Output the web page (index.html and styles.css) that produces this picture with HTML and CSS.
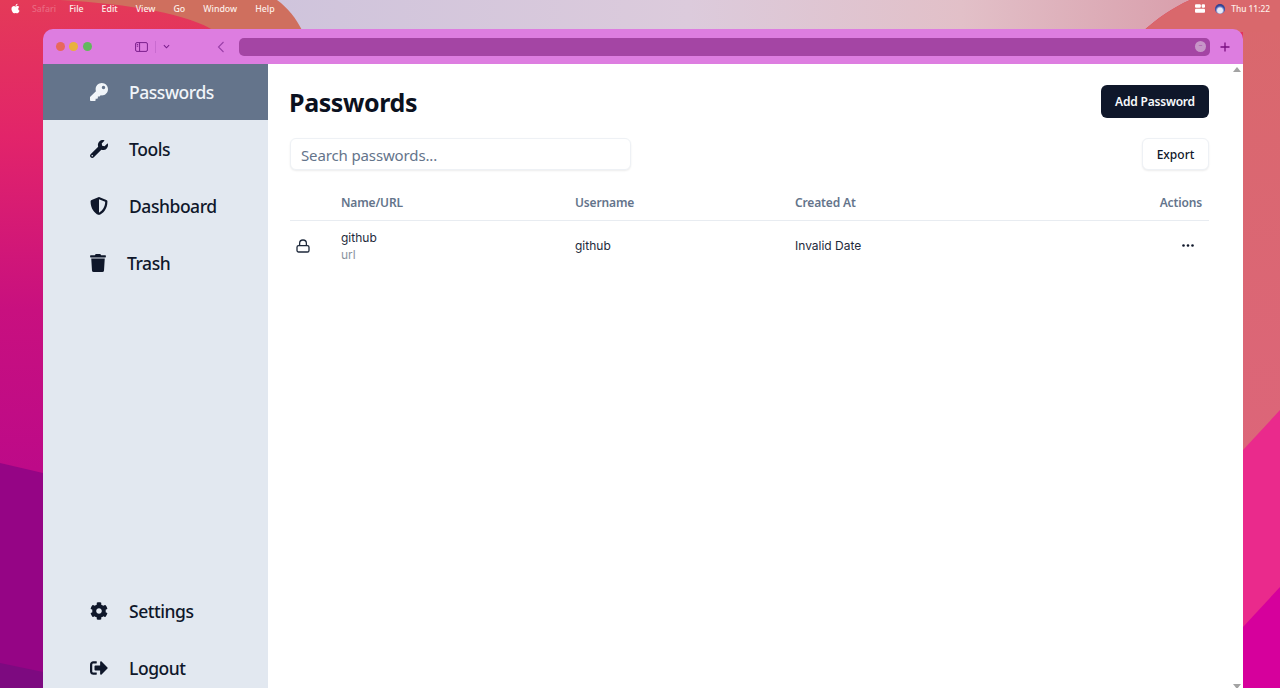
FILE: index.html
```html
<!DOCTYPE html>
<html lang="en">
<head>
    <meta charset="UTF-8">
    <title>Passwords</title>
    <link rel="stylesheet" href="styles.css">
</head>
<body>
    <!-- desktop wallpaper -->
    <svg class="wallpaper" viewBox="0 0 1280 688" preserveAspectRatio="none">
        <defs>
            <linearGradient id="wallLeft" x1="0" y1="0" x2="0" y2="1">
                <stop offset="0" stop-color="#e43a58"/>
                <stop offset="0.2" stop-color="#e2246a"/>
                <stop offset="0.45" stop-color="#c8107f"/>
                <stop offset="0.68" stop-color="#bd0a88"/>
            </linearGradient>
            <linearGradient id="wallRight" x1="0" y1="0" x2="0" y2="1">
                <stop offset="0" stop-color="#d9686c"/>
                <stop offset="1" stop-color="#de6480"/>
            </linearGradient>
            <linearGradient id="wallTop" x1="0" y1="0" x2="1" y2="0">
                <stop offset="0" stop-color="#cfc4dc"/>
                <stop offset="0.45" stop-color="#dccbdc"/>
                <stop offset="0.75" stop-color="#e2c0c8"/>
                <stop offset="1" stop-color="#d99fac"/>
            </linearGradient>
        </defs>
        <rect width="1280" height="688" fill="url(#wallLeft)"/>
        <path d="M0 463L43 473V688H0Z" fill="#950585"/>
        <path d="M0 663L43 672V688H0Z" fill="#7d0a80"/>
        <rect x="1243" width="37" height="688" fill="url(#wallRight)"/>
        <path d="M1243 450L1280 410V688H1243Z" fill="#ea2a8c"/>
        <path d="M1243 627L1280 587V688H1243Z" fill="#d6009c"/>
        <path d="M60 0C130 4 190 14 216 32H330V0Z" fill="#cf6f5e"/>
        <path d="M277 0C288 8 296 18 303 32H1142C1158 18 1172 8 1190 0Z" fill="url(#wallTop)"/>
        <path d="M1190 0C1172 8 1158 18 1142 32H1280V0Z" fill="#d9686c"/>
    </svg>

    <div class="menubar">
        <div class="menu-left">
            <svg class="apple" viewBox="0 0 384 512"><path d="M318.7 268.7c-.2-36.7 16.4-64.4 50-84.8-18.8-26.9-47.2-41.7-84.7-44.6-35.5-2.8-74.3 20.7-88.5 20.7-15 0-49.4-19.7-76.4-19.7C63.3 141.2 4 184.8 4 273.5q0 39.3 14.4 81.2c12.8 36.7 59 126.7 107.2 125.2 25.2-.6 43-17.9 75.8-17.9 31.8 0 48.3 17.9 76.4 17.9 48.6-.7 90.4-82.5 102.6-119.3-65.2-30.7-61.7-90-61.7-91.9zm-56.6-164.2c27.3-32.4 24.8-61.9 24-72.5-24.1 1.4-52 16.4-67.9 34.9-17.5 19.8-27.8 44.3-25.6 71.9 26.1 2 49.9-11.4 69.5-34.3z"/></svg>
            <span class="menu-app">Safari</span>
            <span>File</span>
            <span>Edit</span>
            <span>View</span>
            <span>Go</span>
            <span>Window</span>
            <span>Help</span>
        </div>
        <div class="menu-right">
            <svg class="tray" viewBox="0 0 12 10"><rect x="0" y="0" width="7" height="4.2" rx="1.2"/><rect x="8" y="0" width="4" height="4.2" rx="1.2"/><rect x="0" y="5.4" width="12" height="4.6" rx="1.2"/></svg>
            <span class="siri"></span>
            <span>Thu 11:22</span>
        </div>
    </div>

    <div class="window">
        <div class="toolbar">
            <div class="lights">
                <span class="light red"></span>
                <span class="light yellow"></span>
                <span class="light green"></span>
            </div>
            <svg class="tb-sidebar" viewBox="0 0 13 10"><rect x="0.6" y="0.6" width="11.8" height="8.8" rx="1.4"/><path d="M4.6 0.6V9.4"/><path d="M1.8 2.6H3.2M1.8 4.2H3.2" /></svg>
            <span class="tb-sep"></span>
            <svg class="tb-chev" viewBox="0 0 8 5"><path d="M1 1l3 3 3-3"/></svg>
            <svg class="tb-back" viewBox="0 0 8 12"><path d="M6.5 1L1.5 6l5 5"/></svg>
            <div class="urlbar"><span class="url-more">•••</span></div>
            <svg class="tb-plus" viewBox="0 0 10 10"><path d="M5 0.5v9M0.5 5h9"/></svg>
        </div>

        <div class="app">
            <aside class="sidebar">
                <a class="side-item active">
                    <svg class="side-icon" viewBox="0 0 512 512"><path d="M512 176.001C512 273.203 433.202 352 336 352c-11.22 0-22.19-1.062-32.827-3.069l-24.012 27.014A23.999 23.999 0 0 1 261.223 384H224v40c0 13.255-10.745 24-24 24h-40v40c0 13.255-10.745 24-24 24H24c-13.255 0-24-10.745-24-24v-78.059c0-6.365 2.529-12.47 7.029-16.971l161.802-161.802C163.108 213.814 160 195.271 160 176 160 78.798 238.797.001 335.999 0 433.488-.001 512 78.511 512 176.001zM336 128c0 26.51 21.49 48 48 48s48-21.49 48-48-21.49-48-48-48-48 21.49-48 48z"/></svg>
                    <span>Passwords</span>
                </a>
                <a class="side-item">
                    <svg class="side-icon" viewBox="0 0 512 512"><path d="M507.73 109.1c-2.24-9.03-13.54-12.09-20.12-5.51l-74.36 74.36-67.88-11.31-11.31-67.88 74.36-74.36c6.62-6.62 3.43-17.9-5.66-20.16-47.38-11.74-99.55.91-136.58 37.93-39.64 39.64-50.55 97.1-34.05 147.2L18.74 402.76c-24.99 24.99-24.99 65.51 0 90.5 24.99 24.99 65.51 24.99 90.5 0l213.21-213.21c50.12 16.71 107.47 5.68 147.37-34.22 37.07-37.07 49.7-89.32 37.91-136.73zM64 472c-13.25 0-24-10.75-24-24 0-13.26 10.75-24 24-24s24 10.74 24 24c0 13.25-10.75 24-24 24z"/></svg>
                    <span>Tools</span>
                </a>
                <a class="side-item">
                    <svg class="side-icon" viewBox="0 0 512 512"><path d="M466.5 83.7l-192-80a48.15 48.15 0 0 0-36.9 0l-192 80C27.7 91.1 16 108.6 16 128c0 198.5 114.5 335.7 221.5 380.3 11.8 4.9 25.1 4.9 36.9 0C360.1 472.6 496 349.3 496 128c0-19.4-11.7-36.9-29.5-44.3zM256.1 446.3l-.1-381 175.9 73.3c-3.3 151.4-82.1 261.1-175.8 307.7z"/></svg>
                    <span>Dashboard</span>
                </a>
                <a class="side-item trash">
                    <svg class="side-icon" viewBox="0 0 448 512"><path d="M432 32H312l-9.4-18.7A24 24 0 0 0 281.1 0H166.8a23.72 23.72 0 0 0-21.4 13.3L136 32H16A16 16 0 0 0 0 48v32a16 16 0 0 0 16 16h416a16 16 0 0 0 16-16V48a16 16 0 0 0-16-16zM53.2 467a48 48 0 0 0 47.9 45h245.8a48 48 0 0 0 47.9-45L416 128H32z"/></svg>
                    <span>Trash</span>
                </a>
                <a class="side-item bottom">
                    <svg class="side-icon" viewBox="0 0 512 512"><path d="M487.4 315.7l-42.6-24.6c4.3-23.2 4.3-47 0-70.2l42.6-24.6c4.9-2.8 7.1-8.6 5.5-14-11.1-35.6-30-67.8-54.7-94.6-3.8-4.1-10-5.1-14.8-2.3L380.8 110c-17.9-15.4-38.5-27.3-60.8-35.1V25.8c0-5.6-3.9-10.5-9.4-11.7-36.7-8.2-74.3-7.8-109.2 0-5.5 1.2-9.4 6.1-9.4 11.7V75c-22.2 7.9-42.8 19.8-60.8 35.1L88.7 85.5c-4.9-2.8-11-1.9-14.8 2.3-24.7 26.7-43.6 58.9-54.7 94.6-1.7 5.4.6 11.2 5.5 14L67.3 221c-4.3 23.2-4.3 47 0 70.2l-42.6 24.6c-4.9 2.8-7.1 8.6-5.5 14 11.1 35.6 30 67.8 54.7 94.6 3.8 4.1 10 5.1 14.8 2.3l42.6-24.6c17.9 15.4 38.5 27.3 60.8 35.1v49.2c0 5.6 3.9 10.5 9.4 11.7 36.7 8.2 74.3 7.8 109.2 0 5.5-1.2 9.4-6.1 9.4-11.7v-49.2c22.2-7.9 42.8-19.8 60.8-35.1l42.6 24.6c4.9 2.8 11 1.9 14.8-2.3 24.7-26.7 43.6-58.9 54.7-94.6 1.5-5.5-.7-11.3-5.6-14.1zM256 336c-44.1 0-80-35.9-80-80s35.9-80 80-80 80 35.9 80 80-35.9 80-80 80z"/></svg>
                    <span>Settings</span>
                </a>
                <a class="side-item">
                    <svg class="side-icon" viewBox="0 0 512 512"><path d="M497 273L329 441c-15 15-41 4.5-41-17v-96H152c-13.3 0-24-10.7-24-24v-96c0-13.3 10.7-24 24-24h136V88c0-21.4 25.9-32 41-17l168 168c9.3 9.4 9.3 24.6 0 34zM192 436v-40c0-6.6-5.4-12-12-12H96c-17.7 0-32-14.3-32-32V160c0-17.7 14.3-32 32-32h84c6.6 0 12-5.4 12-12V76c0-6.6-5.4-12-12-12H96c-53 0-96 43-96 96v192c0 53 43 96 96 96h84c6.6 0 12-5.4 12-12z"/></svg>
                    <span>Logout</span>
                </a>
            </aside>

            <main class="content">
                <div class="page-head">
                    <h1>Passwords</h1>
                    <button class="btn-primary">Add Password</button>
                </div>
                <div class="page-tools">
                    <input class="search" type="text" placeholder="Search passwords...">
                    <button class="btn-outline">Export</button>
                </div>
                <table class="pw-table">
                    <thead>
                        <tr>
                            <th class="col-icon"></th>
                            <th class="col-name">Name/URL</th>
                            <th class="col-user">Username</th>
                            <th class="col-date">Created At</th>
                            <th class="col-actions">Actions</th>
                        </tr>
                    </thead>
                    <tbody>
                        <tr>
                            <td class="cell-lock">
                                <svg class="lock" viewBox="0 0 14 14"><rect x="1" y="6.6" width="12" height="6.4" rx="1.6"/><path d="M3.6 6.6V4.4a3.4 3.4 0 0 1 6.8 0v2.2"/></svg>
                            </td>
                            <td>
                                <div class="entry-name">github</div>
                                <div class="entry-url">url</div>
                            </td>
                            <td>github</td>
                            <td>Invalid Date</td>
                            <td class="cell-more">
                                <svg class="more" viewBox="0 0 12 3"><circle cx="1.5" cy="1.5" r="1.3"/><circle cx="6" cy="1.5" r="1.3"/><circle cx="10.5" cy="1.5" r="1.3"/></svg>
                            </td>
                        </tr>
                    </tbody>
                </table>
            </main>

            <div class="scrollbar">
                <span class="arrow-up"></span>
                <span class="arrow-down"></span>
            </div>
        </div>
    </div>
</body>
</html>
```

FILE: styles.css
```css
* {
    margin: 0;
    padding: 0;
    box-sizing: border-box;
}

html, body {
    height: 100%;
    overflow: hidden;
}

body {
    font-family: "Noto Sans", sans-serif;
    color: #0f172a;
    background-color: #d4145a;
}

.wallpaper {
    position: absolute;
    top: 0;
    left: 0;
    width: 100%;
    height: 100%;
    z-index: -1;
}

.menubar {
    height: 17px;
    display: flex;
    justify-content: space-between;
    align-items: center;
    padding: 0 10px 0 11px;
    font-size: 8.8px;
    font-weight: 500;
    color: #fdeee8;
}

.menu-left {
    display: flex;
    align-items: center;
    gap: 18px;
}

.menu-app {
    color: rgba(255, 255, 255, 0.25);
    margin-left: -6px;
    margin-right: -5px;
}

.apple {
    width: 9px;
    height: 11px;
    fill: #fff;
}

.menu-right {
    display: flex;
    align-items: center;
    font-size: 8.4px;
}

.tray {
    width: 10px;
    height: 9px;
    fill: #fff;
}

.siri {
    width: 10px;
    height: 10px;
    margin: 0 6px 0 10px;
    border-radius: 50%;
    background: radial-gradient(circle at 50% 65%, #e8eaf6 0 30%, #3a4fa8 55%, #1d2a60 100%);
}

.window {
    width: 1200px;
    height: 667px;
    margin: 12px 0 0 43px;
    display: flex;
    flex-direction: column;
    border-radius: 10px 10px 0 0;
    overflow: hidden;
}

.toolbar {
    height: 35px;
    display: flex;
    align-items: center;
    background-color: #dd7de0;
    padding-left: 13px;
}

.lights {
    display: flex;
    gap: 4.4px;
    width: 79px;
}

.light {
    width: 9px;
    height: 9px;
    border-radius: 50%;
}

.red { background-color: #e8685c; }
.yellow { background-color: #e8b13c; }
.green { background-color: #62b85c; }

.tb-sidebar {
    width: 13px;
    height: 10px;
    fill: none;
    stroke: #7a1f8c;
    stroke-width: 1;
}

.tb-sep {
    width: 1px;
    height: 12px;
    background-color: #c96bd0;
    margin-left: 7px;
}

.tb-chev {
    width: 7px;
    height: 5px;
    margin-left: 7px;
    fill: none;
    stroke: #7a1f8c;
    stroke-width: 1.2;
}

.tb-back {
    width: 8px;
    height: 12px;
    margin-left: 47px;
    fill: none;
    stroke: #9a3fa8;
    stroke-width: 1.1;
}

.urlbar {
    width: 971px;
    height: 18px;
    margin-left: 14px;
    background-color: #a445a4;
    border-radius: 5px;
    display: flex;
    justify-content: flex-end;
    align-items: center;
    padding-right: 4px;
}

.url-more {
    width: 11px;
    height: 11px;
    border-radius: 50%;
    background-color: #c795c8;
    color: #a445a4;
    font-size: 3px;
    line-height: 11px;
    text-align: center;
}

.tb-plus {
    width: 10px;
    height: 10px;
    margin-left: 10px;
    fill: none;
    stroke: #7a0f80;
    stroke-width: 1.3;
}

.app {
    flex: 1;
    display: flex;
    min-height: 0;
    background-color: #fff;
}

.sidebar {
    width: 225px;
    display: flex;
    flex-direction: column;
    gap: 1px;
    background-color: #e2e8f0;
    font-size: 17.5px;
    font-weight: 500;
    letter-spacing: -0.45px;
}

.side-item {
    height: 56px;
    display: flex;
    align-items: center;
    gap: 21px;
    padding-left: 47px;
    color: #0f172a;
}

.side-item span {
    position: relative;
    top: -0.5px;
}

.side-item.active {
    background-color: #64748b;
    color: #f1f5f9;
}

.side-item.bottom {
    margin-top: auto;
}

.side-icon {
    width: 18px;
    height: 18px;
    fill: currentColor;
    flex-shrink: 0;
}

.trash .side-icon {
    width: 16px;
}

.content {
    flex: 1;
    padding: 20px 22px 0;
    min-width: 0;
}

.page-head {
    display: flex;
    justify-content: space-between;
    align-items: center;
    height: 34px;
}

h1 {
    padding-top: 1px;
    margin-left: -1px;
    font-size: 25px;
    font-weight: 700;
    letter-spacing: -0.4px;
    color: #0b1120;
}

.btn-primary {
    width: 108px;
    height: 33px;
    border: none;
    border-radius: 6px;
    background-color: #0f172a;
    color: #f8fafc;
    font-family: "Noto Sans", sans-serif;
    font-size: 12px;
    font-weight: 600;
    letter-spacing: -0.2px;
}

.page-tools {
    display: flex;
    justify-content: space-between;
    align-items: center;
    margin-top: 20px;
}

.search {
    width: 341px;
    height: 32px;
    padding: 1px 10px 0;
    border: 1px solid #eef1f5;
    border-radius: 6px;
    box-shadow: 0 1px 2px rgba(0, 0, 0, 0.08);
    font-family: "Noto Sans", sans-serif;
    font-size: 15px;
    letter-spacing: -0.13px;
    background-color: #fff;
}

.search::placeholder {
    color: #64748b;
}

.btn-outline {
    width: 67px;
    height: 32px;
    border: 1px solid #eef1f5;
    border-radius: 6px;
    box-shadow: 0 1px 2px rgba(0, 0, 0, 0.08);
    background-color: #fff;
    color: #0f172a;
    font-family: "Noto Sans", sans-serif;
    font-size: 12px;
    font-weight: 500;
}

.pw-table {
    width: 100%;
    margin-top: 15px;
    border-collapse: collapse;
    table-layout: fixed;
    font-family: Inter, "Noto Sans", sans-serif;
    font-size: 12px;
}

.pw-table th {
    height: 35px;
    padding: 0 8px;
    text-align: left;
    color: #64748b;
    font-family: "Noto Sans", sans-serif;
    font-size: 12px;
    font-weight: 600;
    letter-spacing: -0.15px;
    border-bottom: 1px solid #e8ecf1;
}

.pw-table td {
    height: 50px;
    padding: 1px 8px 0;
    color: #1e293b;
}

.col-icon { width: 43px; }
.col-name { width: 234px; }
.col-user { width: 220px; }

.pw-table .col-actions {
    text-align: right;
    padding-right: 7px;
}

.pw-table .cell-lock {
    padding-left: 6px;
}

.lock {
    display: block;
    width: 14px;
    height: 14px;
    fill: none;
    stroke: #1e293b;
    stroke-width: 1.3;
}

.entry-name {
    line-height: 17px;
}

.entry-url {
    line-height: 17px;
    color: #8a93a0;
}

.pw-table .cell-more {
    padding-right: 15px;
}

.more {
    display: block;
    width: 12px;
    height: 3px;
    margin-left: auto;
    fill: #0f172a;
}

.scrollbar {
    width: 12px;
    position: relative;
    background-color: #fff;
}

.arrow-up,
.arrow-down {
    position: absolute;
    left: 2px;
    width: 0;
    height: 0;
    border-left: 4px solid transparent;
    border-right: 4px solid transparent;
}

.arrow-up {
    top: 3px;
    border-bottom: 5px solid #a3a3a3;
}

.arrow-down {
    top: 620px;
    border-top: 5px solid #a3a3a3;
}
```
